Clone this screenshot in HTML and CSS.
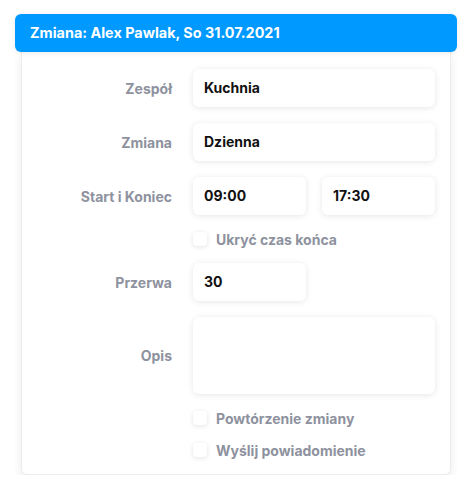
FILE: index.html
```html
<!DOCTYPE html>
<html lang="pl">

<head>
    <meta charset="UTF-8">
    <meta name="viewport" content="width=device-width, initial-scale=1.0">
    <title>Zmiana</title>
    <link rel="stylesheet" href="styles.css">
</head>

<body>
    <div class="wrap">
        <div class="head">Zmiana: Alex Pawlak, So 31.07.2021</div>
        <div class="card">
            <div class="lbl">Zespół</div>
            <div class="field"><div class="inp">Kuchnia</div></div>

            <div class="lbl">Zmiana</div>
            <div class="field"><div class="inp">Dzienna</div></div>

            <div class="lbl">Start i Koniec</div>
            <div class="field two">
                <div class="inp">09:00</div>
                <div class="inp">17:30</div>
            </div>

            <div></div>
            <div class="chk"><span class="box"></span>Ukryć czas końca</div>

            <div class="lbl">Przerwa</div>
            <div class="field two"><div class="inp">30</div></div>

            <div class="lbl">Opis</div>
            <div class="field"><div class="inp area"></div></div>

            <div></div>
            <div class="chk"><span class="box"></span>Powtórzenie zmiany</div>

            <div></div>
            <div class="chk"><span class="box"></span>Wyślij powiadomienie</div>
        </div>
    </div>
</body>

</html>
```

FILE: styles.css
```css
body {
    margin: 0;
    padding: 0;
    background: #fff;
    font-family: Inter, "Noto Sans", sans-serif;
    font-weight: 700;
    font-size: 14px;
}

.wrap {
    width: 442px;
    padding: 14px 15px 0 15px;
}

.head {
    height: 38px;
    line-height: 38px;
    padding-left: 15px;
    background-color: #0099ff;
    color: #fff;
    font-size: 14.4px;
    border-radius: 6px;
    box-shadow: 0 1px 6px rgba(0, 0, 0, 0.08);
    position: relative;
}

.card {
    margin: 0 6px;
    border: 1px solid #ececec;
    border-top: none;
    border-radius: 0 0 6px 6px;
    box-shadow: 0 4px 10px rgba(0, 0, 0, 0.08);
    display: grid;
    grid-template-columns: 150px 1fr;
    column-gap: 21px;
    row-gap: 16px;
    padding: 17px 15px 16px 0;
}

.lbl {
    text-align: right;
    color: #8e929e;
    align-self: center;
}

.field {
    display: grid;
    grid-template-columns: 1fr;
}

.field.two {
    grid-template-columns: 1fr 1fr;
    column-gap: 16px;
}

.inp {
    height: 38px;
    line-height: 38px;
    padding-left: 11px;
    color: #111;
    background: #fff;
    border-radius: 6px;
    box-shadow: 0 1px 6px rgba(0, 0, 0, 0.1);
}

.inp.area {
    height: 77px;
}

.chk {
    display: flex;
    align-items: center;
    height: 16px;
    color: #8e929e;
}

.box {
    width: 14px;
    height: 14px;
    border-radius: 4px;
    background: #fff;
    box-shadow: 0 1px 5px rgba(0, 0, 0, 0.12);
    margin-right: 9px;
}
```
